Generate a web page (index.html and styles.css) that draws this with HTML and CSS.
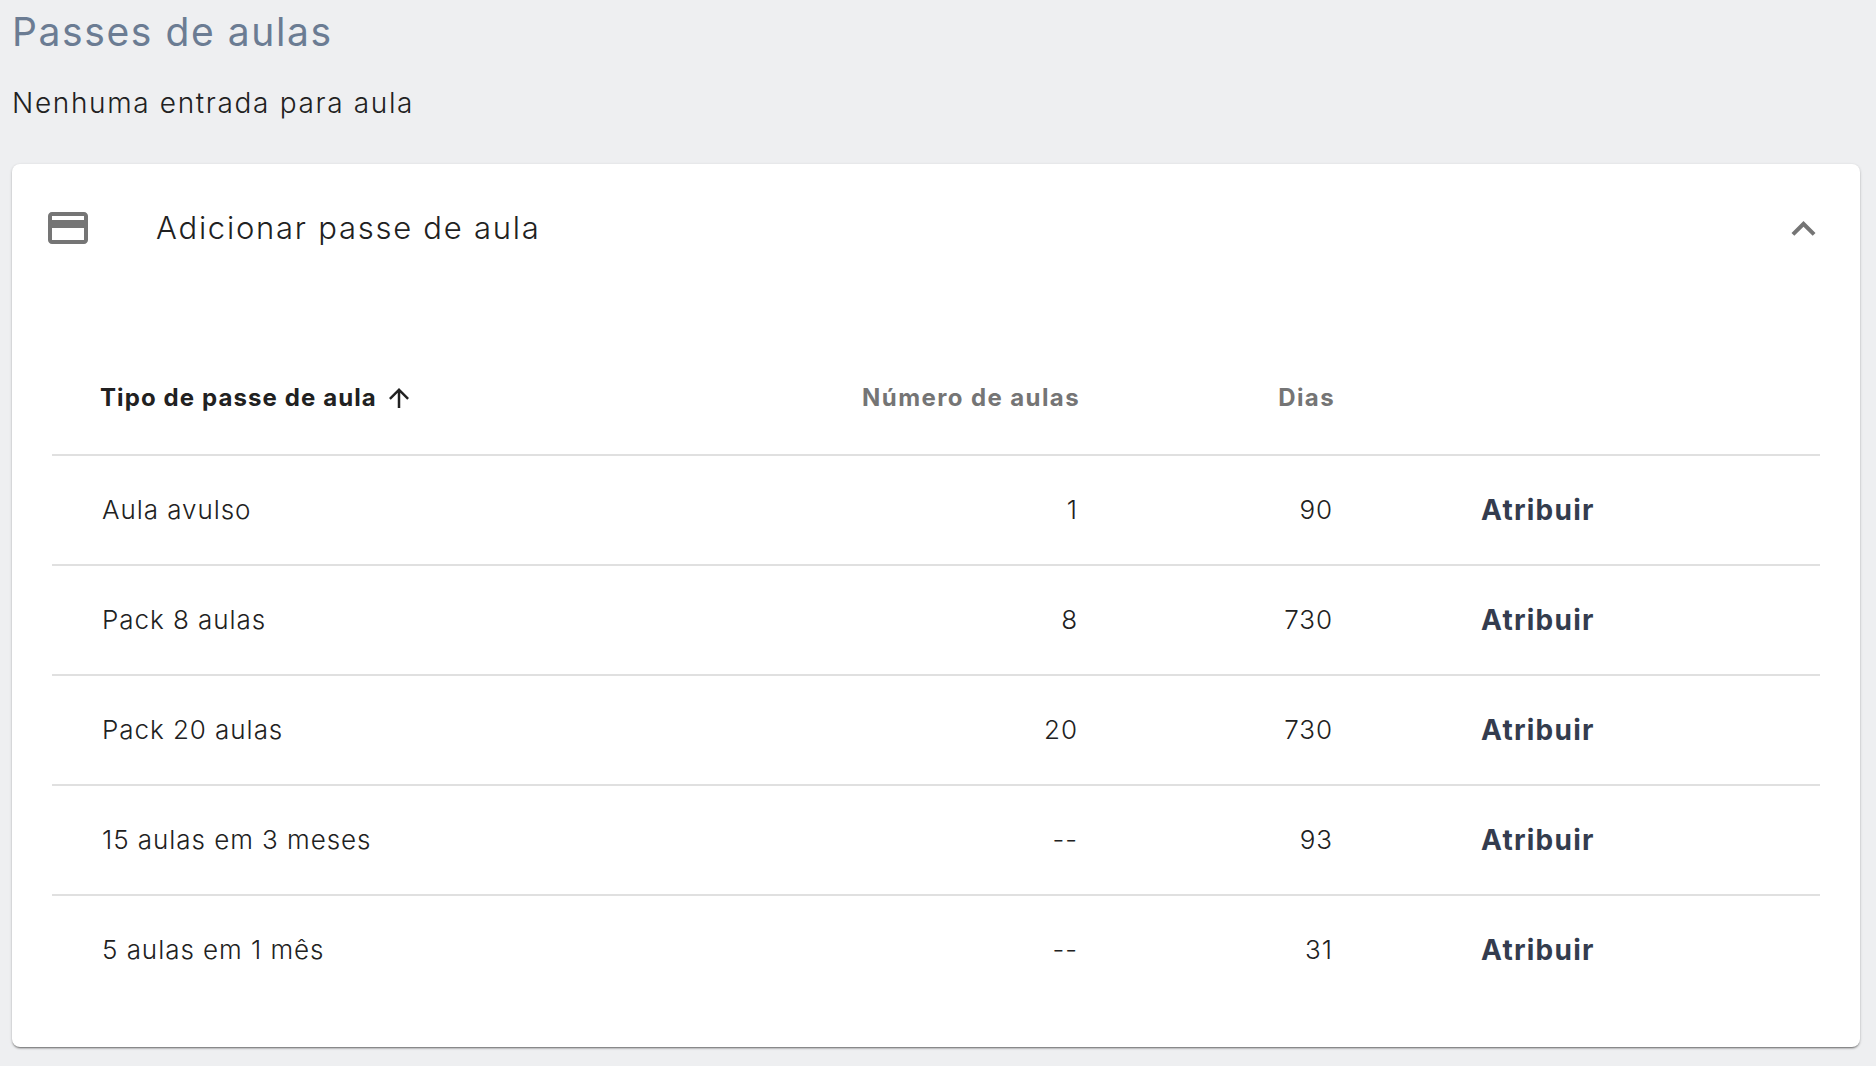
FILE: index.html
```html
<!DOCTYPE html>
<html lang="pt">
<head>
<meta charset="utf-8">
<title>Passes de aulas</title>
<link rel="stylesheet" href="styles.css">
</head>
<body>
<main class="page">
  <h1 class="page-title">Passes de aulas</h1>
  <p class="empty-note">Nenhuma entrada para aula</p>
  <section class="card">
    <header class="card-head">
      <svg class="card-icon" viewBox="2 4 20 16" aria-hidden="true"><path d="M20 4H4c-1.11 0-1.99.89-1.99 2L2 18c0 1.11.89 2 2 2h16c1.11 0 2-.89 2-2V6c0-1.11-.89-2-2-2zm0 14H4v-6h16v6zm0-10H4V6h16v2z"/></svg>
      <h2 class="card-title">Adicionar passe de aula</h2>
      <svg class="chevron" viewBox="6 8 12 8" aria-hidden="true"><path d="M7.41 15.41 12 10.83l4.59 4.58L18 14l-6-6-6 6z"/></svg>
    </header>
    <div class="table">
      <div class="row head">
        <div class="cell name sorted">Tipo de passe de aula
          <svg class="sort" viewBox="4 4 16 16" aria-hidden="true"><path d="m4 12 1.41 1.41L11 7.83V20h2V7.83l5.58 5.59L20 12l-8-8-8 8z"/></svg>
        </div>
        <div class="cell num">Número de aulas</div>
        <div class="cell num">Dias</div>
        <div class="cell"></div>
      </div>
      <div class="row">
        <div class="cell name">Aula avulso</div><div class="cell num">1</div><div class="cell num">90</div><div class="cell action">Atribuir</div>
      </div>
      <div class="row">
        <div class="cell name">Pack 8 aulas</div><div class="cell num">8</div><div class="cell num">730</div><div class="cell action">Atribuir</div>
      </div>
      <div class="row">
        <div class="cell name">Pack 20 aulas</div><div class="cell num">20</div><div class="cell num">730</div><div class="cell action">Atribuir</div>
      </div>
      <div class="row">
        <div class="cell name">15 aulas em 3 meses</div><div class="cell num">--</div><div class="cell num">93</div><div class="cell action">Atribuir</div>
      </div>
      <div class="row">
        <div class="cell name">5 aulas em 1 mês</div><div class="cell num">--</div><div class="cell num">31</div><div class="cell action">Atribuir</div>
      </div>
    </div>
  </section>
</main>
</body>
</html>
```
FILE: styles.css
```css
* { box-sizing: border-box; }
html, body { margin: 0; height: 100%; overflow: hidden; }
body {
  background: #eeeff1;
  color: #212121;
  font-family: Inter, "Noto Sans", "Liberation Sans", sans-serif;
}
.page { padding: 0 16px 0 12px; }
.page-title {
  margin: 0;
  padding-top: 8px;
  height: 65px;
  font-size: 39px;
  line-height: 48px;
  font-weight: 400;
  letter-spacing: 1.6px;
  color: #6b7c93;
}
.empty-note {
  margin: 0;
  height: 99px;
  padding-top: 20px;
  font-size: 28px;
  font-weight: 300;
  letter-spacing: 1.65px;
  line-height: 36px;
}
.card {
  height: 883px;
  background: #fff;
  border-radius: 8px;
  box-shadow: 0 1px 3px rgba(0,0,0,.22), 0 2px 2px -1px rgba(0,0,0,.45);
}
.card-head {
  display: flex;
  align-items: center;
  height: 128px;
  padding: 0 43px 0 36px;
}
.card-icon { width: 40px; height: 32px; fill: #757575; flex: none; }
.card-title {
  margin: 0 0 0 68px;
  flex: 1;
  font-size: 31px;
  font-weight: 300;
  letter-spacing: 1.75px;
  line-height: 40px;
}
.chevron { width: 25px; height: 16px; fill: #757575; flex: none; margin-top: 2px; margin-right: 1px; }
.table { margin: 0 40px; padding-top: 35px; }
.row {
  display: grid;
  grid-template-columns: 776px 250px 255px 1fr;
  height: 110px;
  align-items: center;
  font-size: 26px;
  font-weight: 300;
  letter-spacing: .95px;
  padding-bottom: 1px;
  border-bottom: 2px solid #e0e0e0;
}
.row:last-child { border-bottom: 0; padding-bottom: 3px; }
.row.head {
  height: 129px;
  padding-top: 14px;
  padding-bottom: 0;
  font-size: 24px;
  font-weight: 700;
  letter-spacing: 1.4px;
  color: #757575;
}
.name { padding-left: 50px; }
.head .name { padding-left: 48px; }
.num { text-align: right; }
.head .num { margin-right: -2px; }
.sorted { display: flex; align-items: center; gap: 12px; color: #212121; letter-spacing: 1.1px; }
.sort { width: 20px; height: 20px; fill: #212121; }
.action {
  padding-left: 148px;
  font-size: 28px;
  font-weight: 700;
  letter-spacing: 1.25px;
  color: #343c4e;
}
```
